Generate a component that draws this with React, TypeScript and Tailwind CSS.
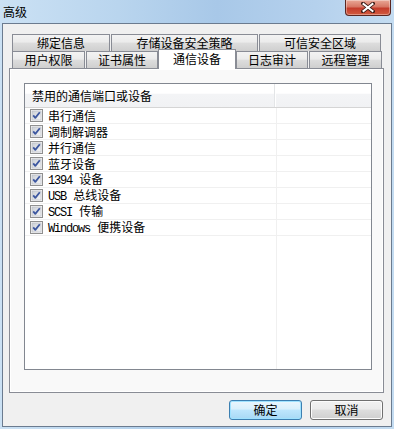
import React from "react";

const cjk = { fontFamily: '"Noto Sans CJK SC", "Liberation Sans", sans-serif' };
const mono = { fontFamily: '"Liberation Mono", "Noto Sans CJK SC", monospace' };

function Check() {
  return (
    <svg width="13" height="13" viewBox="0 0 13 13" className="shrink-0">
      <defs>
        <linearGradient id="cbg" x1="0" y1="0" x2="1" y2="1">
          <stop offset="0" stopColor="#cbcfd5" />
          <stop offset="1" stopColor="#f6f6f6" />
        </linearGradient>
      </defs>
      <rect x="0.5" y="0.5" width="12" height="12" fill="#f4f4f4" stroke="#8f8f8f" />
      <rect x="2" y="2" width="9" height="9" fill="url(#cbg)" stroke="#b5bac2" strokeWidth="0.6" />
      <path d="M3.2 6.4 L5.3 8.9 L9.8 3.2" fill="none" stroke="#3d57a0" strokeWidth="1.8" strokeLinejoin="round" />
    </svg>
  );
}

function Label({ parts }: { parts: { t: string; m?: boolean }[] }) {
  return (
    <span className="flex items-baseline text-[12px] leading-[15px] text-black whitespace-pre">
      {parts.map((p, i) =>
        p.m ? (
          <React.Fragment key={i}>
            <span style={mono} className="text-[12px] tracking-[-1.2px] mr-[1.2px]">
              {p.t}
            </span>
            <span className="inline-block w-[6px]" />
          </React.Fragment>
        ) : (
          <span key={i} style={cjk}>
            {p.t}
          </span>
        )
      )}
    </span>
  );
}

const rows: { t: string; m?: boolean }[][] = [
  [{ t: "串行通信" }],
  [{ t: "调制解调器" }],
  [{ t: "并行通信" }],
  [{ t: "蓝牙设备" }],
  [{ t: "1394", m: true }, { t: "设备" }],
  [{ t: "USB", m: true }, { t: "总线设备" }],
  [{ t: "SCSI", m: true }, { t: "传输" }],
  [{ t: "Windows", m: true }, { t: "便携设备" }],
];

const tabBase =
  "h-[17px] border border-b-0 border-[#898c95] bg-[linear-gradient(180deg,#f3f3f3_0%,#ebebeb_45%,#dddddd_50%,#cfcfcf_100%)] flex items-center justify-center text-[12px] text-black";

export default function App() {
  return (
    <div
      className="w-[394px] h-[429px] flex flex-col bg-[linear-gradient(90deg,#cbe1f4_0%,#b9d5ee_30%,#a8c8e8_55%,#b5d1ed_80%,#c4dcf1_100%)] relative overflow-hidden"
      style={cjk}
    >
      {/* title bar */}
      <div className="h-[23px] shrink-0 flex items-start pl-[3px] pt-[4px]">
        <span className="text-[12px] leading-[15px] text-black">高级</span>
      </div>
      <div className="absolute right-[3px] top-0 w-[46px] h-[16px] rounded-b-[4px] border border-t-0 border-[#5a2620] bg-[linear-gradient(180deg,#e9a897_0%,#d77765_45%,#c43c2c_55%,#d25b3f_100%)] flex items-center justify-center shadow-[inset_0_0_0_1px_rgba(255,255,255,0.35)]">
        <svg width="14" height="11" viewBox="0 0 14 11">
          <path d="M2 1.5 L12 9.5 M12 1.5 L2 9.5" stroke="#3b1b16" strokeWidth="3.6" strokeLinecap="square" />
          <path d="M2.5 2 L11.5 9 M11.5 2 L2.5 9" stroke="#ffffff" strokeWidth="2" strokeLinecap="square" />
        </svg>
      </div>

      {/* client area */}
      <div className="mx-[2px] h-[404px] border border-[#6b7b8f] bg-[#f0f0f0] flex flex-col">
        <div className="pt-[10px] pl-[6px]">
          {/* tab rows */}
          <div className="pl-[3px] flex flex-col">
            <div className="flex gap-[1px] h-[17px]">
              <div className={tabBase + " w-[98px]"}>绑定信息</div>
              <div className={tabBase + " w-[147px]"}>存储设备安全策略</div>
              <div className={tabBase + " w-[122px]"}>可信安全区域</div>
            </div>
            <div className="flex items-end gap-[1px] h-[17px]">
              <div className={tabBase + " w-[73px]"}>用户权限</div>
              <div className={tabBase + " w-[72px]"}>证书属性</div>
              <div className="relative z-10 -mx-[1px] mb-[-1px] h-[20px] w-[78px] border border-b-0 border-[#898c95] bg-white flex items-center justify-center text-[12px] text-black pb-[1px]">
                通信设备
              </div>
              <div className={tabBase + " w-[72px]"}>日志审计</div>
              <div className={tabBase + " w-[73px]"}>远程管理</div>
            </div>
          </div>
          {/* panel */}
          <div className="w-[375px] h-[325px] border border-[#898c95] bg-[#f9f9f9]">
            <div className="w-full h-full border border-white pt-[13px] pl-[13px]">
              <div className="w-[348px] h-[287px] border border-[#828790] bg-white flex flex-col">
                {/* header */}
                <div className="h-[24px] shrink-0 flex border-b border-[#d5d5d5] bg-[linear-gradient(180deg,#ffffff_0%,#ffffff_40%,#f3f4f6_45%,#f1f2f4_100%)]">
                  <div className="w-[250px] flex items-center pl-[7px] pt-[1px] text-[12px] text-black border-r border-[#e3e5e7]">
                    禁用的通信端口或设备
                  </div>
                  <div className="flex-1 border-l border-white" />
                </div>
                {rows.map((r, i) => (
                  <div key={i} className="h-[16px] shrink-0 flex border-b border-[#f0f0f0]">
                    <div className="w-[252px] flex items-center pl-[5px] gap-[5px] border-r border-[#f0f0f0]">
                      <Check />
                      <Label parts={r} />
                    </div>
                    <div className="flex-1" />
                  </div>
                ))}
                <div className="flex-1 flex">
                  <div className="w-[252px] border-r border-[#f0f0f0]" />
                </div>
              </div>
            </div>
          </div>
        </div>
        {/* buttons */}
        <div className="flex justify-end gap-[8px] pr-[8px] pt-[7px]">
          <button className="w-[73px] h-[20px] rounded-[3px] border border-[#3c7fb1] bg-[linear-gradient(180deg,#eaf6fd_0%,#d9f0fc_45%,#bee6fd_50%,#a7d9f5_100%)] shadow-[inset_0_0_0_1px_#9fe2ff] text-[12px] text-black flex items-center justify-center">
            确定
          </button>
          <button className="w-[73px] h-[20px] rounded-[3px] border border-[#707070] bg-[linear-gradient(180deg,#f2f2f2_0%,#ebebeb_45%,#dddddd_50%,#cfcfcf_100%)] shadow-[inset_0_0_0_1px_#fcfcfc] text-[12px] text-black flex items-center justify-center">
            取消
          </button>
        </div>
      </div>
    </div>
  );
}
